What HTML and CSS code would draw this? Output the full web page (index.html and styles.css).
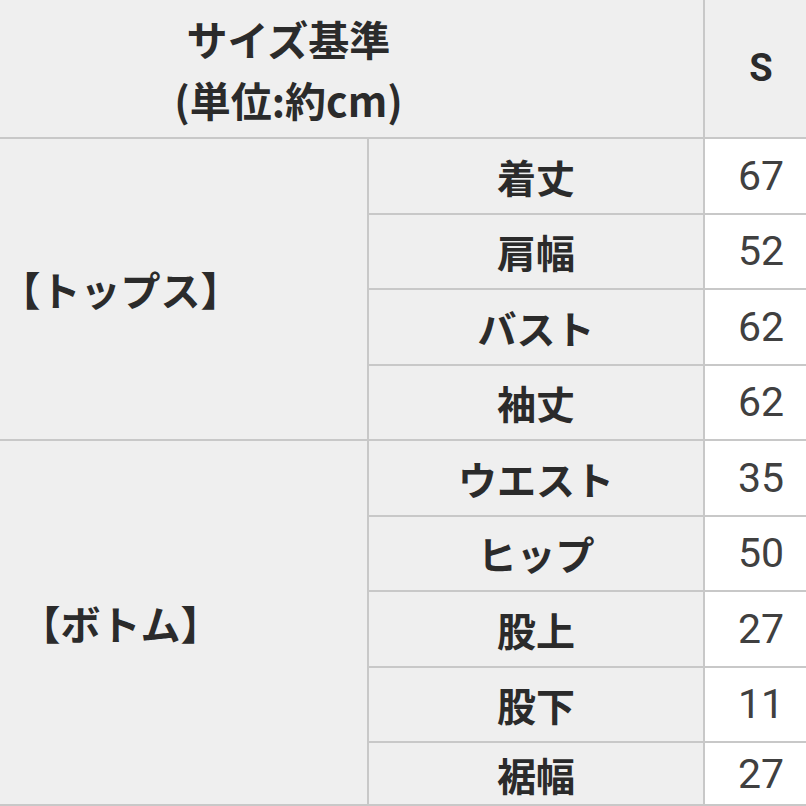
FILE: index.html
```html
<!DOCTYPE html>
<html lang="ja">
<head>
<meta charset="utf-8">
<link rel="stylesheet" href="styles.css">
</head>
<body>
<div class="frame">
  <div class="sheet">
    <div class="cell head span2"><span>サイズ基準<br>(単位:約cm)</span></div>
    <div class="cell head size">S</div>

    <div class="cell group tops">【トップス】</div>
    <div class="cell label">着丈</div><div class="cell val">67</div>
    <div class="cell label">肩幅</div><div class="cell val">52</div>
    <div class="cell label">バスト</div><div class="cell val">62</div>
    <div class="cell label">袖丈</div><div class="cell val">62</div>

    <div class="cell group bottoms">【ボトム】</div>
    <div class="cell label">ウエスト</div><div class="cell val">35</div>
    <div class="cell label">ヒップ</div><div class="cell val">50</div>
    <div class="cell label">股上</div><div class="cell val">27</div>
    <div class="cell label">股下</div><div class="cell val">11</div>
    <div class="cell label">裾幅</div><div class="cell val">27</div>
  </div>
</div>
</body>
</html>
```
FILE: styles.css
```css
html, body {
  margin: 0;
  padding: 0;
  background: #ffffff;
}
.frame {
  width: 806px;
  height: 806px;
  overflow: hidden;
}
.sheet {
  margin-left: -126px;
  width: 943px;
  display: grid;
  grid-template-columns: 493px 334px 112px;
  grid-template-rows: 137px repeat(8, 73.5px) 61px;
  gap: 2px;
  padding-bottom: 2px;
  background: #c8c8c8;
}
.cell {
  display: flex;
  align-items: center;
  justify-content: center;
  background: #efefef;
  color: #2b2b2b;
  font-family: "Noto Sans CJK JP", "Noto Sans", sans-serif;
  font-weight: 700;
  font-size: 39px;
}
.head {
  text-align: center;
  line-height: 61px;
  font-size: 41px;
}
.span2 {
  grid-column: 1 / 3;
}
.size {
  font-family: Roboto, "Liberation Sans", sans-serif;
  font-size: 38px;
}
.group {
  grid-column: 1;
  font-size: 40px;
}
.tops {
  grid-row: 2 / 6;
}
.bottoms {
  grid-row: 6 / 11;
}
.label {
  grid-column: 2;
}
.val {
  grid-column: 3;
  background: #ffffff;
  color: #404040;
  font-family: Roboto, "Liberation Sans", sans-serif;
  font-weight: 400;
  font-size: 41px;
}
```
